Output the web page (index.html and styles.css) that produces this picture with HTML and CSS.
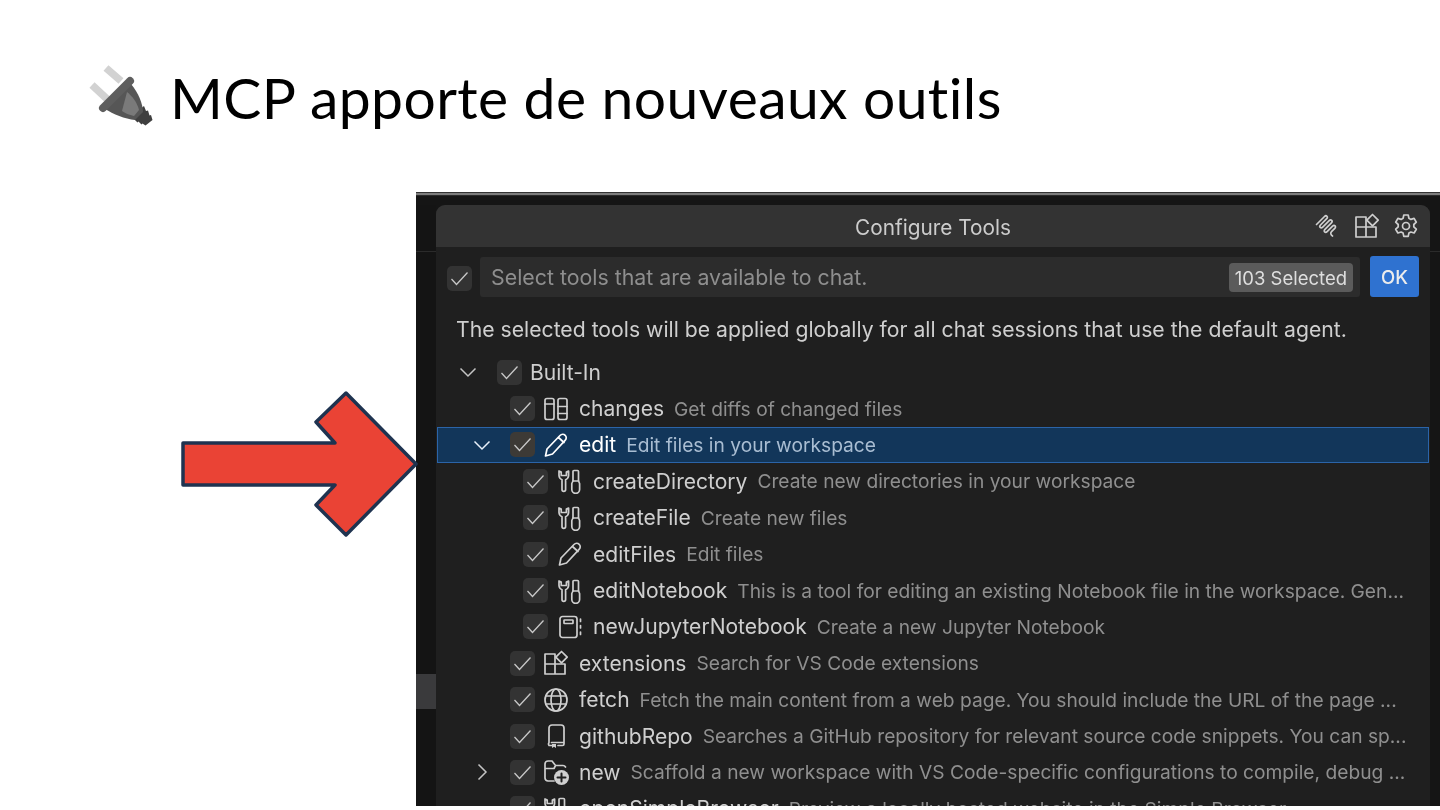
FILE: index.html
```html
<!DOCTYPE html>
<html lang="fr">
<head>
<meta charset="utf-8">
<title>MCP apporte de nouveaux outils</title>
<link rel="stylesheet" href="styles.css">
</head>
<body>
<svg class="defs" width="0" height="0" aria-hidden="true">
  <symbol id="i-check" viewBox="0 0 25 25"><path d="M4.500 13l5 5.500L20.500 6.500"/></symbol>
  <symbol id="i-down" viewBox="0 0 24 24"><path d="M4.500 8.500l7.500 7.500 7.500-7.500"/></symbol>
  <symbol id="i-right" viewBox="0 0 24 24"><path d="M8.500 4.500l7.500 7.500-7.500 7.500"/></symbol>
  <symbol id="i-changes" viewBox="0 0 26 26"><rect x="2" y="2.500" width="9" height="21" rx="2"/><rect x="15" y="2.500" width="9" height="21" rx="2"/><path d="M2 8h9M15 10.500h9M15 17.500h9"/></symbol>
  <symbol id="i-pencil" viewBox="0 0 26 26"><path d="M2.500 24l1.500-7L17 3.500c1.500-1.500 3.800-1.500 5.200-.2s1.400 3.500-.1 5L9.500 22z"/><path d="M15.500 5.500l5.500 5"/></symbol>
  <symbol id="i-tool" viewBox="0 0 26 26"><path d="M2 3v4.500a5 5 0 0 0 3 4.200v9.800a1.800 1.800 0 0 0 3.600 0v-9.800a5 5 0 0 0 3-4.200V3l-2.200 1v3.500H4.200V4z"/><path d="M16 3.500a1 1 0 0 1 1-1h3.500a1 1 0 0 1 1 1V13H16z"/><path d="M16 13l-1.200 2.500v6a3.900 3.900 0 0 0 7.800 0v-6L21.500 13"/></symbol>
  <symbol id="i-notebook" viewBox="0 0 26 26"><rect x="3" y="2.500" width="17" height="21" rx="2.500"/><rect x="7" y="6" width="9" height="3.500" rx=".5"/><path d="M23.500 5v2.500M23.500 11.500V14M23.500 18v2.500"/></symbol>
  <symbol id="i-ext" viewBox="0 0 26 26"><path d="M2 4h10v10H2zM2 14h10v10H2zM12 14h10v10H12z"/><path d="M18.500 1.500l5.700 5.700-5.700 5.700-5.700-5.700z"/></symbol>
  <symbol id="i-globe" viewBox="0 0 26 26"><circle cx="13" cy="13" r="11"/><ellipse cx="13" cy="13" rx="5" ry="11"/><path d="M3 9h20M3 17h20"/></symbol>
  <symbol id="i-repo" viewBox="0 0 26 26"><path d="M6 19.500V5a3 3 0 0 1 3-3h9a3 3 0 0 1 3 3v16a1.500 1.500 0 0 1-1.500 1.500H15M6 19.500a2.500 2.500 0 0 0 0 3h3M8.500 19.500H21"/><path class="solid" d="M9 21h4v4l-2-1.300L9 25z"/></symbol>
  <symbol id="i-newfolder" viewBox="0 0 26 26"><path d="M11 22H5a3 3 0 0 1-3-3V5a3 3 0 0 1 3-3h4l3.500 4.500H20a3 3 0 0 1 2.500 1.500M2 9.500h9l1.500-3"/><circle class="solid" cx="18.500" cy="18.500" r="7.500"/><path class="cut" d="M18.500 14.500v8M14.500 18.500h8"/></symbol>
  <symbol id="i-clip" viewBox="0 0 26 26"><path d="M1.500 11.500L9.500 3.500c1.800-1.800 4 .4 2.200 2.200L5.500 12c-1.800 1.800.4 4 2.200 2.200l6.500-6.500c1.800-1.800 4 .4 2.200 2.200l-6.500 6.500c-1.800 1.800.4 4 2.200 2.200l5.500-5.500c1.800-1.800 4 .4 2.200 2.200l-3.300 3.300c-1.300 1.300-.8 3.400 1 4.400"/></symbol>
  <symbol id="i-gear" viewBox="0 0 26 26"><circle cx="13" cy="13" r="3.500"/><path d="M10.800 2h4.400l.7 3.300 2 1.100 3.200-1 2.200 3.800-2.500 2.300v2.400l2.500 2.300-2.200 3.800-3.200-1-2 1.100-.7 3.300h-4.400l-.7-3.300-2-1.100-3.200 1-2.200-3.800 2.500-2.300v-2.400L2.700 9.200l2.200-3.800 3.200 1 2-1.100z"/></symbol>
</svg>

<main class="slide">
  <header class="title-row">
    <svg class="plug" viewBox="86 62 72 72" aria-hidden="true">
      <path class="prong" d="M106 68l15 13M92 85l15 14"/>
      <path class="plug-tail" d="M139 110l5-4 2 5 2-.5 1.500 5 1.500-.5 1.500 5-7 5.500-3-2-1 1-3-3-1 1-3-3z"/>
      <path class="plug-body" d="M131 84c7 8 12 20 12 28l-8 8c-10-1-22-6-30-11z"/>
      <path class="plug-shade" d="M127 92c5 4 10 10 12 18l-5 6c-5-1-9-3-12-5z"/>
      <path class="plug-band" d="M130 81l-27 27"/>
    </svg>
    <h1 class="title">MCP apporte de nouveaux outils</h1>
  </header>

  <section class="stage">
    <svg class="arrow" viewBox="0 0 240 148" aria-hidden="true">
      <polygon points="3,52 155,52 136,31 166,2 236,73 166,144 136,114 155,94 3,94"/>
    </svg>

    <figure class="shot">
      <div class="shot-edge"></div>
      <div class="shot-body">
        <div class="side-left"><span class="side-rule"></span><span class="side-tab"></span></div>
        <div class="dialog">
          <div class="dialog-head">
            <span class="dialog-title">Configure Tools</span>
            <span class="head-icons">
              <svg class="ico"><use href="#i-clip"/></svg>
              <svg class="ico"><use href="#i-ext"/></svg>
              <svg class="ico"><use href="#i-gear"/></svg>
            </span>
          </div>
          <div class="input-row">
            <span class="cb"><svg><use href="#i-check"/></svg></span>
            <div class="input">
              <span class="placeholder">Select tools that are available to chat.</span>
              <span class="badge">103 Selected</span>
            </div>
            <span class="ok">OK</span>
          </div>
          <p class="message">The selected tools will be applied globally for all chat sessions that use the default agent.</p>
          <div class="list">
            <div class="row root">
              <span class="twistie"><svg><use href="#i-down"/></svg></span>
              <span class="cb"><svg><use href="#i-check"/></svg></span>
              <span class="name">Built-In</span>
            </div>
            <div class="row l1">
              <span class="twistie"></span>
              <span class="cb"><svg><use href="#i-check"/></svg></span>
              <svg class="ico"><use href="#i-changes"/></svg>
              <span class="name">changes</span><span class="desc">Get diffs of changed files</span>
            </div>
            <div class="row l1 selected">
              <span class="twistie"><svg><use href="#i-down"/></svg></span>
              <span class="cb"><svg><use href="#i-check"/></svg></span>
              <svg class="ico"><use href="#i-pencil"/></svg>
              <span class="name">edit</span><span class="desc">Edit files in your workspace</span>
            </div>
            <div class="row l2">
              <span class="cb"><svg><use href="#i-check"/></svg></span>
              <svg class="ico"><use href="#i-tool"/></svg>
              <span class="name">createDirectory</span><span class="desc">Create new directories in your workspace</span>
            </div>
            <div class="row l2">
              <span class="cb"><svg><use href="#i-check"/></svg></span>
              <svg class="ico"><use href="#i-tool"/></svg>
              <span class="name">createFile</span><span class="desc">Create new files</span>
            </div>
            <div class="row l2">
              <span class="cb"><svg><use href="#i-check"/></svg></span>
              <svg class="ico"><use href="#i-pencil"/></svg>
              <span class="name">editFiles</span><span class="desc">Edit files</span>
            </div>
            <div class="row l2">
              <span class="cb"><svg><use href="#i-check"/></svg></span>
              <svg class="ico"><use href="#i-tool"/></svg>
              <span class="name">editNotebook</span><span class="desc">This is a tool for editing an existing Notebook file in the workspace. Gen...</span>
            </div>
            <div class="row l2">
              <span class="cb"><svg><use href="#i-check"/></svg></span>
              <svg class="ico"><use href="#i-notebook"/></svg>
              <span class="name">newJupyterNotebook</span><span class="desc">Create a new Jupyter Notebook</span>
            </div>
            <div class="row l1">
              <span class="twistie"></span>
              <span class="cb"><svg><use href="#i-check"/></svg></span>
              <svg class="ico"><use href="#i-ext"/></svg>
              <span class="name">extensions</span><span class="desc">Search for VS Code extensions</span>
            </div>
            <div class="row l1">
              <span class="twistie"></span>
              <span class="cb"><svg><use href="#i-check"/></svg></span>
              <svg class="ico"><use href="#i-globe"/></svg>
              <span class="name">fetch</span><span class="desc">Fetch the main content from a web page. You should include the URL of the page ...</span>
            </div>
            <div class="row l1">
              <span class="twistie"></span>
              <span class="cb"><svg><use href="#i-check"/></svg></span>
              <svg class="ico"><use href="#i-repo"/></svg>
              <span class="name">githubRepo</span><span class="desc">Searches a GitHub repository for relevant source code snippets. You can sp...</span>
            </div>
            <div class="row l1">
              <span class="twistie"><svg><use href="#i-right"/></svg></span>
              <span class="cb"><svg><use href="#i-check"/></svg></span>
              <svg class="ico"><use href="#i-newfolder"/></svg>
              <span class="name">new</span><span class="desc">Scaffold a new workspace with VS Code-specific configurations to compile, debug ...</span>
            </div>
            <div class="row l1">
              <span class="twistie"></span>
              <span class="cb"><svg><use href="#i-check"/></svg></span>
              <svg class="ico"><use href="#i-tool"/></svg>
              <span class="name">openSimpleBrowser</span><span class="desc">Preview a locally hosted website in the Simple Browser</span>
            </div>
          </div>
        </div>
        <div class="side-right"><span class="side-rule"></span></div>
      </div>
    </figure>
  </section>
</main>
</body>
</html>
```

FILE: styles.css
```css
* { box-sizing: border-box; }
html, body { margin: 0; height: 100%; background: #fff; overflow: hidden; }
.defs { position: absolute; }

.slide { width: 1440px; height: 810px; display: flex; flex-direction: column; }

.title-row { height: 192px; display: flex; align-items: flex-start; padding: 62px 0 0 86px; }
.plug { width: 72px; height: 72px; flex: none; }
.prong { stroke: #d2d2d2; stroke-width: 7.500; fill: none; }
.plug-body { fill: #565656; }
.plug-shade { fill: #7a7a7a; }
.plug-band { stroke: #5e5e5e; stroke-width: 8; stroke-linecap: round; fill: none; }
.plug-tail { fill: #3f3f3f; }
.title { margin: -2px 0 0 12px; font: 400 57px/74px Lato, sans-serif; font-variant-ligatures: none; letter-spacing: .42px; color: #000; white-space: nowrap; }

.stage { display: flex; height: 614px; }
.arrow { width: 240px; height: 148px; flex: none; margin: 199px -4px 0 180px; position: relative; z-index: 1; }
.arrow polygon { fill: #ea4335; stroke: #1f3350; stroke-width: 3.500; stroke-linejoin: round; }

.shot { margin: 0; flex: 1; min-width: 0; display: flex; flex-direction: column; background: #151515; overflow: hidden; font-family: Inter, sans-serif; filter: blur(.4px); }
.shot-edge { height: 4px; background: #7c7c7c; border-top: 1px solid #333; border-bottom: 1px solid #2a2a2a; flex: none; }
.shot-body { flex: 1; min-height: 0; display: flex; padding-top: 9px; }

.side-left { width: 20px; flex: none; display: flex; flex-direction: column; background: #141414; }
.side-right { width: 10px; flex: none; }
.side-rule { display: block; height: 1px; margin-top: 46px; background: #2b2b2b; flex: none; }
.side-tab { display: block; height: 35px; margin-top: 422px; background: #3a3a3c; flex: none; }

.dialog { flex: 1; min-width: 0; background: #1f1f1f; border-radius: 9px 9px 0 0; }
.dialog-head { height: 42px; background: #333333; border-radius: 9px 9px 0 0; display: flex; align-items: center; justify-content: center; position: relative; }
.dialog-title { font-size: 20.800px; color: #cccccc; padding-top: 2px; }
.head-icons { position: absolute; right: 11px; top: 8px; display: flex; gap: 13px; }

.ico { width: 26px; height: 26px; flex: none; fill: none; stroke: #cfcfcf; stroke-width: 1.700; stroke-linejoin: round; stroke-linecap: round; }
.solid { fill: #cfcfcf; stroke: none; }
.cut { stroke: #1f1f1f; stroke-width: 2; }

.input-row { display: flex; align-items: center; height: 41px; margin-top: 9px; padding: 0 11px 0 11px; }
.input-row .cb { margin-top: 3px; }
.input { flex: 1; height: 40px; margin: 0 10px 0 8px; background: #2c2c2c; border-radius: 3px; display: flex; align-items: center; justify-content: space-between; padding: 0 7px 0 11px; }
.placeholder { font-size: 21.350px; color: #8e8e8e; }
.badge { height: 29px; line-height: 30px; margin-top: 1px; padding: 0 6px; background: #5b5b5b; border-radius: 4px; color: #dedede; font-size: 18.500px; }
.ok { width: 49px; height: 41px; background: #2f72d0; border-radius: 3px; color: #ececec; font-size: 18.500px; font-weight: 500; display: flex; align-items: center; justify-content: center; flex: none; }

.message { margin: 17px 0 0 20px; height: 30px; font-size: 21.200px; line-height: 30px; color: #cfcfcf; white-space: nowrap; }

.list { margin: 10px 0 0 1px; display: flex; flex-direction: column; }

.row { height: 36.400px; flex: none; display: flex; align-items: center; width: 992px; color: #cfcfcf; white-space: nowrap; border: 1px solid transparent; padding-right: 10px; }
.row.root { padding-left: 18px; }
.row.l1 { padding-left: 32px; }
.row.l2 { padding-left: 85px; }
.row.selected { background: #12365a; border-color: #2b64a8; color: #fff; }
.row.selected .desc { color: #a9bdd2; }
.row.selected .ico { stroke: #fff; }
.row.selected .twistie svg { stroke: #e8f0fa; }
.row.selected .cb { background: #3d3a36; }

.twistie { width: 24px; height: 24px; flex: none; }
.twistie svg { display: block; width: 24px; height: 24px; fill: none; stroke: #c4c4c4; stroke-width: 1.500; }
.row.root .twistie { margin-right: 17px; }
.row.l1 .twistie { margin-right: 16px; }

.cb { width: 25px; height: 25px; flex: none; background: #333333; border-radius: 5px; display: block; }
.cb svg { display: block; width: 25px; height: 25px; fill: none; stroke: #c8c8c8; stroke-width: 1.300; }
.row .ico { margin-left: 9px; }
.row.l1 .ico { margin-left: 8px; }

.name { font-size: 21.050px; flex: none; margin-left: 10px; }
.root .name { margin-left: 8px; }
.desc { font-size: 19.200px; color: #8f8f8f; margin-left: 10px; min-width: 0; flex: 0 1 auto; }
```
